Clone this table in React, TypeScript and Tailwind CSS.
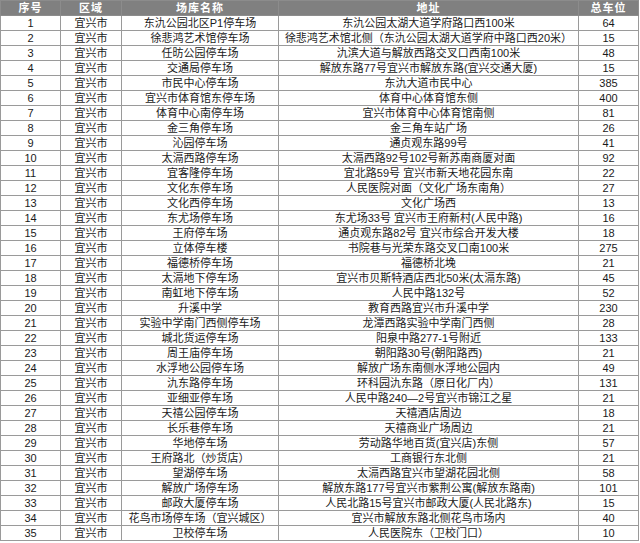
type Row = [string, string, string, number];

const rows: Row[] = [
  ['宜兴市', '东氿公园北区P1停车场', '东氿公园太湖大道学府路口西100米', 64],
  ['宜兴市', '徐悲鸿艺术馆停车场', '徐悲鸿艺术馆北侧（东氿公园太湖大道学府中路口西20米）', 15],
  ['宜兴市', '任昉公园停车场', '氿滨大道与解放西路交叉口西南100米', 48],
  ['宜兴市', '交通局停车场', '解放东路77号宜兴市解放东路(宜兴交通大厦)', 15],
  ['宜兴市', '市民中心停车场', '东氿大道市民中心', 385],
  ['宜兴市', '宜兴市体育馆东停车场', '体育中心体育馆东侧', 400],
  ['宜兴市', '体育中心南停车场', '宜兴市体育中心体育馆南侧', 81],
  ['宜兴市', '金三角停车场', '金三角车站广场', 26],
  ['宜兴市', '沁园停车场', '通贞观东路99号', 41],
  ['宜兴市', '太滆西路停车场', '太滆西路92号102号新苏南商厦对面', 92],
  ['宜兴市', '宜客隆停车场', '宜北路59号 宜兴市新天地花园东南', 22],
  ['宜兴市', '文化东停车场', '人民医院对面（文化广场东南角）', 27],
  ['宜兴市', '文化西停车场', '文化广场西', 13],
  ['宜兴市', '东尤场停车场', '东尤场33号 宜兴市王府新村(人民中路)', 16],
  ['宜兴市', '王府停车场', '通贞观东路82号 宜兴市综合开发大楼', 18],
  ['宜兴市', '立体停车楼', '书院巷与光荣东路交叉口南100米', 275],
  ['宜兴市', '福德桥停车场', '福德桥北堍', 21],
  ['宜兴市', '太滆地下停车场', '宜兴市贝斯特酒店西北50米(太滆东路)', 45],
  ['宜兴市', '南虹地下停车场', '人民中路132号', 52],
  ['宜兴市', '升溪中学', '教育西路宜兴市升溪中学', 230],
  ['宜兴市', '实验中学南门西侧停车场', '龙潭西路实验中学南门西侧', 28],
  ['宜兴市', '城北货运停车场', '阳泉中路277-1号附近', 133],
  ['宜兴市', '周王庙停车场', '朝阳路30号(朝阳路西)', 21],
  ['宜兴市', '水浮地公园停车场', '解放广场东南侧水浮地公园内', 49],
  ['宜兴市', '氿东路停车场', '环科园氿东路（原日化厂内）', 131],
  ['宜兴市', '亚细亚停车场', '人民中路240—2号宜兴市锦江之星', 21],
  ['宜兴市', '天禧公园停车场', '天禧酒店周边', 18],
  ['宜兴市', '长乐巷停车场', '天禧商业广场周边', 21],
  ['宜兴市', '华地停车场', '劳动路华地百货(宜兴店)东侧', 57],
  ['宜兴市', '王府路北（炒货店）', '工商银行东北侧', 21],
  ['宜兴市', '望湖停车场', '太滆西路宜兴市望湖花园北侧', 58],
  ['宜兴市', '解放广场停车场', '解放东路177号宜兴市紫荆公寓(解放东路南)', 101],
  ['宜兴市', '邮政大厦停车场', '人民北路15号宜兴市邮政大厦(人民北路东)', 15],
  ['宜兴市', '花鸟市场停车场（宜兴城区）', '宜兴市解放东路北侧花鸟市场内', 40],
  ['宜兴市', '卫校停车场', '人民医院东（卫校门口）', 10],
];

const headers = ['序号', '区域', '场库名称', '地址', '总车位'];

export default function App() {
  return (
    <div
      className="w-[640px] h-[543px] bg-white overflow-hidden"
      style={{ fontFamily: '"Liberation Sans", "Noto Sans CJK SC", sans-serif' }}
    >
      <table className="w-[639px] table-fixed border-collapse text-[11px] leading-none text-[#1a1a1a]">
        <colgroup>
          <col className="w-[60px]" />
          <col className="w-[61px]" />
          <col className="w-[157px]" />
          <col className="w-[300px]" />
          <col />
        </colgroup>
        <thead>
          <tr className="h-[15px] bg-[#808080] text-white">
            {headers.map((h) => (
              <th key={h} className="border border-[#8c8c8c] p-0 text-center font-bold tracking-[1px]">
                {h}
              </th>
            ))}
          </tr>
        </thead>
        <tbody>
          {rows.map((r, i) => (
            <tr key={i} className="h-[15px]">
              <td className="border border-[#9a9a9a] p-0 text-center">{i + 1}</td>
              <td className="border border-[#9a9a9a] p-0 text-center">{r[0]}</td>
              <td className="border border-[#9a9a9a] p-0 text-center whitespace-nowrap">{r[1]}</td>
              <td className="border border-[#9a9a9a] p-0 text-center whitespace-nowrap">{r[2]}</td>
              <td className="border border-[#9a9a9a] p-0 text-center">{r[3]}</td>
            </tr>
          ))}
        </tbody>
      </table>
    </div>
  );
}
